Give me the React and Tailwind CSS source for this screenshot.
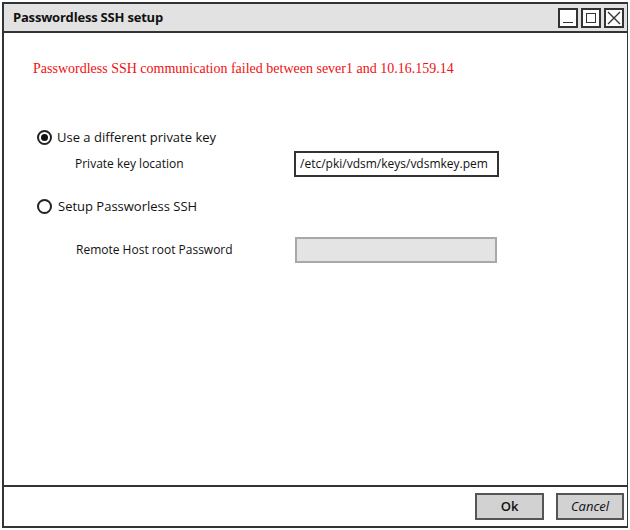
import React from 'react';

const sans = { fontFamily: '"Open Sans", "DejaVu Sans", sans-serif' };

function WinButton({ children }) {
  return (
    <div className="w-[20px] h-[20px] border-2 border-[#333] bg-white flex items-center justify-center">
      {children}
    </div>
  );
}

function Radio({ checked }) {
  return (
    <div className="w-[15px] h-[15px] rounded-full border-2 border-[#222] bg-white flex items-center justify-center">
      {checked && <div className="w-[7px] h-[7px] rounded-full bg-[#111]" />}
    </div>
  );
}

export default function App() {
  return (
    <div className="w-[630px] h-[530px] bg-white p-[2px] text-[#111]" style={sans}>
      <div className="h-full flex flex-col border-2 border-[#333] border-r-[1.5px]">
        {/* title bar */}
        <div className="h-[29px] bg-[#e2e2e2] border-b-2 border-[#333] flex items-center justify-between pl-[9px] pr-[3px]">
          <span className="text-[13px] font-bold tracking-[-0.2px]">Passwordless SSH setup</span>
          <div className="flex gap-[3px]">
            <WinButton>
              <div className="w-[10px] h-[1.5px] bg-[#333] mt-[10px]" />
            </WinButton>
            <WinButton>
              <div className="w-[10px] h-[10px] border-[1.5px] border-[#333]" />
            </WinButton>
            <WinButton>
              <svg width="16" height="16" viewBox="0 0 16 16">
                <path d="M2 2 L14 14 M14 2 L2 14" stroke="#333" strokeWidth="1.4" fill="none" />
              </svg>
            </WinButton>
          </div>
        </div>

        {/* body */}
        <div className="flex-1 pl-[29px] pt-[28px]">
          <p className="text-[14px] text-[#f01010] leading-[16px]" style={{ fontFamily: '"Liberation Serif", "DejaVu Serif", serif' }}>
            Passwordless SSH communication failed between sever1 and 10.16.159.14
          </p>

          <div className="mt-[51px] flex items-center gap-[5px] pl-[4px]">
            <Radio checked />
            <span className="text-[13px]">Use a different private key</span>
          </div>
          <div className="mt-[3px] flex items-center">
            <span className="w-[261px] pl-[42px] text-[12px]">Private key location</span>
            <div className="w-[205px] h-[26px] border-2 border-[#333] bg-white flex items-center pl-[4px] text-[12px]">
              /etc/pki/vdsm/keys/vdsmkey.pem
            </div>
          </div>
          <div className="mt-[20px] flex items-center gap-[6px] pl-[4px]">
            <Radio />
            <span className="text-[13px]">Setup Passworless SSH</span>
          </div>
          <div className="mt-[21px] flex items-center">
            <span className="w-[262px] pl-[43px] text-[12px]">Remote Host root Password</span>
            <div className="w-[202px] h-[26px] border-2 border-[#a8a8a8] bg-[#e4e4e4]" />
          </div>
        </div>

        {/* footer */}
        <div className="h-[41px] border-t-2 border-[#333] flex items-center justify-end gap-[12px] pr-[3px]">
          <div className="w-[69px] h-[27px] border-2 border-[#555] bg-[#d2d2d2] flex items-center justify-center text-[13px] font-semibold">
            Ok
          </div>
          <div className="w-[68px] h-[27px] border-2 border-[#555] bg-[#d2d2d2] flex items-center justify-center text-[13px] italic">
            Cancel
          </div>
        </div>
      </div>
    </div>
  );
}
